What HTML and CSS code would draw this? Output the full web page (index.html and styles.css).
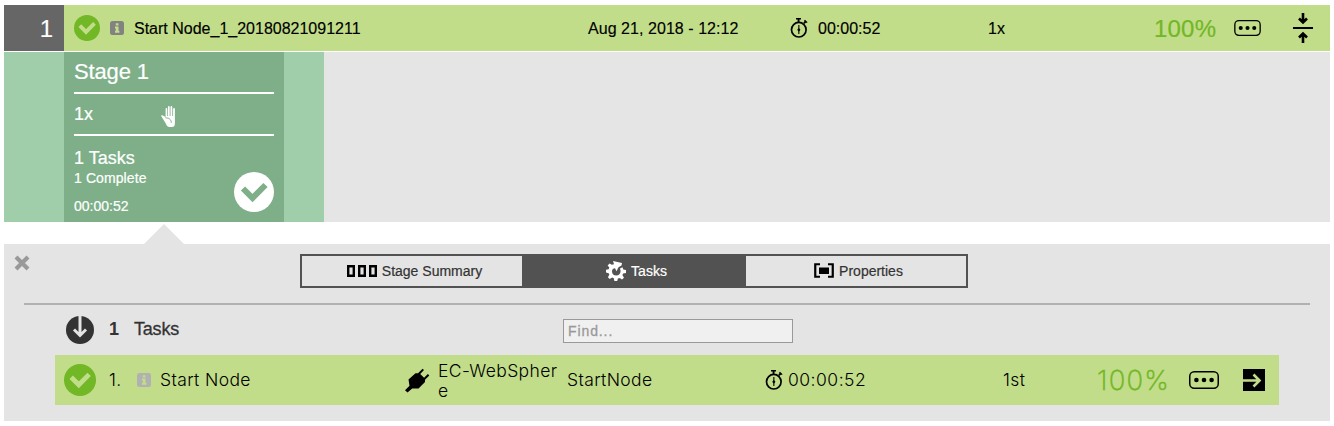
FILE: index.html
```html
<!DOCTYPE html>
<html lang="en">
<head>
<meta charset="utf-8">
<title>Pipeline run</title>
<link rel="stylesheet" href="styles.css">
</head>
<body>
<svg class="defs" width="0" height="0" aria-hidden="true">
  <symbol id="check" viewBox="0 0 40 40"><circle cx="20" cy="20" r="20"/><path class="tick" d="M9 16.500 18.500 26 31.500 13" fill="none" stroke-width="6"/></symbol>
  <symbol id="info" viewBox="0 0 14 14"><rect width="14" height="14" rx="2.500"/><path class="cut" d="M5.800 2.300h2.700v2.200H5.800zM5 5.600h3.500v4.200h.9v2H5v-2h.8V7.500H5z"/></symbol>
  <symbol id="watch" viewBox="0 0 18 20"><circle cx="8.800" cy="11.700" r="7.300" fill="none" stroke="#000" stroke-width="1.700"/><path d="M6 0h5v1.600H9.500v3H7.600v-3H6zM13.300 4.500l1.300-1.400-.6-.6 1-.7 2.600 2.400-.9.900-.7-.5-1.300 1.300zM8.300 7h1.100v3.200l1 1.600-1 1.700V16H8.300v-2.500l-1-1.700 1-1.600z"/></symbol>
  <symbol id="more" viewBox="0 0 30 18"><rect x=".75" y=".75" width="28.500" height="16.500" rx="4.500" fill="none" stroke="#000" stroke-width="1.500"/><circle cx="7.400" cy="9" r="2.300"/><circle cx="15" cy="9" r="2.300"/><circle cx="22.600" cy="9" r="2.300"/></symbol>
</svg>

<header class="run-bar">
  <div class="run-number">1</div>
  <svg class="icon-check" width="26" height="26"><use href="#check"/></svg>
  <svg class="icon-info" width="14" height="14"><use href="#info"/></svg>
  <div class="run-name">Start Node_1_20180821091211</div>
  <div class="run-date">Aug 21, 2018 - 12:12</div>
  <svg width="18" height="20"><use href="#watch"/></svg>
  <div>00:00:52</div>
  <div>1x</div>
  <div class="run-percent">100%</div>
  <svg width="27" height="16"><use href="#more"/></svg>
  <svg width="20" height="30" viewBox="0 0 20 30"><path d="M0 14h20v2H0z"/><path d="M10 0v9M6 5.500l4 4 4-4M10 30v-9M6 24.500l4-4 4 4" fill="none" stroke="#000" stroke-width="2.600"/></svg>
</header>

<section class="stages">
  <div class="stage-track">
    <article class="stage-card">
      <h2 class="stage-title">Stage 1</h2>
      <div class="stage-mode">
        <span>1x</span>
        <svg class="icon-hand" width="16" height="21" viewBox="0 0 16 21"><path d="M4.600 3q0-1 .8-1t.8 1v7h.7V1.200q0-1.200.9-1.200t.9 1.200V10h.8V1.200q0-1.200.9-1.200t.9 1.200V10h.8V3q0-1 .9-1t.9 1v14c0 3-1 4-3 4H8.500c-2 0-3-1.500-4-4L.3 10.300c-.7-1 .4-1.500 1.500-.7l2.800 1.500z"/><path d="M4.300 11.800c3.500 0 6 1.500 6 5" fill="none" stroke="#7eaf88" stroke-width="1"/></svg>
      </div>
      <div class="stage-status">
        <div>
          <div class="stage-tasks">1 Tasks</div>
          <div class="stage-complete">1 Complete</div>
          <div class="stage-time">00:00:52</div>
        </div>
        <svg class="icon-check icon-check-stage" width="40" height="40"><use href="#check"/></svg>
      </div>
    </article>
  </div>
</section>

<div class="pointer"></div>

<section class="panel">
  <div class="panel-head">
    <svg class="icon-close" width="16" height="16" viewBox="0 0 16 16"><path d="M2 2l12 12M14 2L2 14" stroke="#999" stroke-width="4.200"/></svg>
    <nav class="tabs">
      <div class="tab"><svg width="30" height="12" viewBox="0 0 30 12"><path d="M1.200 1.200h5.600v9.600H1.200zM12.200 1.200h5.600v9.600h-5.600zM23.200 1.200h5.600v9.600h-5.600z" fill="none" stroke="#000" stroke-width="2.400"/></svg>Stage Summary</div>
      <div class="tab tab-active"><svg width="20" height="20" viewBox="0 0 20 20" fill="#fff"><path d="M7 0 16 2l-.5 2.500-3 1.800-2 4L9 7.300Q6 7.500 6 10.400q.3 3.900 4.200 4.100 4.200-.2 4.400-4.500l-.6-2.500 2.500-1.200.8 2.200 2.700.5v3l-2.900.4-.7 1.700 1.600 2.600-2 1.700-2.400-1.500-1.700.6-.7 2.500H8.400l-.6-2.700-1.600-.7-2.500 1.400-1.800-1.800 1.400-2.500-.6-1.500L0 11.500V8.700l2.700-.5.600-1.700L1.600 4.400 3.600 2.500 5.800 3.800 8 3.200z"/></svg>Tasks</div>
      <div class="tab"><svg width="20" height="16" viewBox="0 0 20 16"><path d="M6 1.250H1.250v12.500H6M14 1.250h4.750v12.500H14" fill="none" stroke="#000" stroke-width="2.200"/><path d="M5 4.500h10v6.500H5z"/></svg>Properties</div>
    </nav>
  </div>
  <div class="task-head">
    <svg width="28" height="28" viewBox="0 0 28 28"><circle cx="14" cy="14" r="14" fill="#333"/><path d="M14 0v19M8 13.500l6 6 6-6" fill="none" stroke="#e4e4e4" stroke-width="3"/></svg>
    <div class="task-count">1</div>
    <div class="task-label">Tasks</div>
    <input class="find" type="text" placeholder="Find...">
  </div>
  <div class="task-row">
    <svg class="icon-check" width="32" height="32"><use href="#check"/></svg>
    <div>1.</div>
    <svg class="icon-info icon-info-pale" width="14" height="14"><use href="#info"/></svg>
    <div>Start Node</div>
    <svg width="25" height="25" viewBox="0 0 25 25"><path d="M0 22.300 4.500 17.800 3.500 11.500 10.500 5.300 13 5.300 17.600.7 19 2.100 15.200 5.900 19.100 9.800 22.900 6 24.300 7.400 20 11.700 20 14 13.500 20.500 7.200 20.500 2.500 24.500z"/></svg>
    <div class="plugin">EC-WebSphere</div>
    <div>StartNode</div>
    <svg width="18" height="20"><use href="#watch"/></svg>
    <div class="task-time">00:00:52</div>
    <div>1st</div>
    <div class="task-percent">100%</div>
    <svg width="30" height="18"><use href="#more"/></svg>
    <svg width="22" height="22" viewBox="0 0 22 22"><path d="M0 0h22v22H0z"/><path d="M0 11.500h16M10.500 5.500l6 6-6 6" fill="none" stroke="#c2dd89" stroke-width="2.600"/></svg>
  </div>
</section>
</body>
</html>
```
FILE: styles.css
```css
* { box-sizing: border-box; }

body {
  margin: 0;
  padding: 5px 4px;
  background: #fff;
  color: #000;
  font-family: "Liberation Sans", Arial, sans-serif;
  font-size: 16px;
}

svg { display: block; }
.defs { position: absolute; }

.run-bar {
  display: grid;
  grid-template-columns: 70px 36px 24px 454px 202px 28px 170px 166px 80px 59px 1fr;
  align-items: center;
  height: 46px;
  background: #c2dd89;
  -webkit-text-stroke: 0.15px currentColor;
}
.run-bar > div { padding-top: 1px; }
.run-bar > .run-number {
  width: 60px;
  height: 46px;
  padding: 0 11px 0 0;
  background: #666;
  color: #fff;
  font-size: 24px;
  line-height: 47px;
  text-align: right;
}
.run-date { letter-spacing: 0.05px; }
.run-percent {
  color: #71b726;
  font-size: 24px;
  letter-spacing: 0.2px;
  -webkit-text-stroke: 0.2px #71b726;
}

.icon-check { fill: #71b726; stroke: #c2dd89; }
#check circle { stroke: none; }
.icon-check-stage { fill: #fff; stroke: #7eaf88; }
.icon-info { fill: #828282; }
.icon-info-pale { fill: #b1b1b1; }
.cut { fill: #c2dd89; }

.stages {
  height: 170px;
  margin-top: 1px;
  background: #e5e5e5;
}
.stage-track {
  width: 320px;
  height: 170px;
  padding: 0 40px 0 60px;
  background: #a0ceab;
}
.stage-card {
  height: 170px;
  padding: 0 10px;
  background: #7eaf88;
  color: #fff;
  -webkit-text-stroke: 0.2px #fff;
}
.stage-title {
  height: 42px;
  margin: 0;
  border-bottom: 2px solid #fff;
  font-size: 22px;
  font-weight: 400;
  letter-spacing: -0.15px;
  line-height: 40px;
}
.stage-mode {
  display: flex;
  align-items: center;
  gap: 68px;
  height: 42px;
  border-bottom: 2px solid #fff;
  font-size: 18px;
}
.icon-hand { margin-top: 4px; fill: #fff; }
.stage-status {
  display: flex;
  align-items: flex-end;
  justify-content: space-between;
  height: 76px;
}
.stage-status > div { height: 64px; }
.stage-tasks { font-size: 18px; line-height: 20px; }
.stage-complete { font-size: 14px; letter-spacing: 0.1px; line-height: 20px; }
.stage-time { margin-top: 8px; font-size: 14px; line-height: 20px; }

.pointer {
  width: 40px;
  height: 20px;
  margin: 2px 0 0 140px;
  background: #e4e4e4;
  clip-path: polygon(50% 0, 100% 100%, 0 100%);
}

.panel {
  height: 177px;
  padding: 0 20px;
  background: #e4e4e4;
}
.panel-head {
  display: flex;
  align-items: flex-start;
  height: 61px;
  padding-top: 10px;
  border-bottom: 2px solid #b1b1b1;
}
.icon-close { margin: 1px 0 0 -10px; }
.tabs {
  display: flex;
  width: 668px;
  height: 34px;
  margin-left: 270px;
  border: 2px solid #525252;
}
.tab {
  display: flex;
  flex: 0 0 220px;
  align-items: center;
  justify-content: center;
  gap: 5px;
  padding-left: 5px;
  color: #333;
  font-size: 14px;
  -webkit-text-stroke: 0.2px currentColor;
}
.tab-active {
  flex-basis: 224px;
  background: #525252;
  color: #fff;
}

.task-head {
  display: grid;
  grid-template-columns: 43px 25px 429px 230px;
  align-items: center;
  height: 50px;
  padding-left: 42px;
  color: #333;
  font-size: 18px;
}
.task-count { margin-top: -2px; font-weight: 700; }
.task-label { margin-top: -2px; letter-spacing: -0.2px; -webkit-text-stroke: 0.3px #333; }
.find {
  width: 230px;
  height: 24px;
  margin-top: 2px;
  padding: 0 4px;
  border: 1px solid #999;
  border-radius: 0;
  background: #f0f0f0;
  font-family: "Liberation Sans", Arial, sans-serif;
  font-size: 14px;
  letter-spacing: 0.9px;
}
.find::placeholder { color: #999; opacity: 1; -webkit-text-stroke: 0.3px #999; }

.task-row {
  display: grid;
  grid-template-columns: 45px 28px 23px 245px 33px 129px 198px 23px 215px 94px 92px 54px 22px;
  align-items: center;
  width: 1224px;
  height: 50px;
  margin-left: 31px;
  padding-left: 9px;
  background: #c2dd89;
  font-family: Inter, "Liberation Sans", sans-serif;
  font-size: 17.500px;
  font-weight: 300;
  letter-spacing: 0.38px;
  line-height: 20px;
}
.task-row > .plugin {
  width: 124px;
  padding-top: 1px;
  word-break: break-all;
}
.task-time { letter-spacing: 0.5px; }
.task-percent {
  color: #71b726;
  font-size: 27.500px;
  font-weight: 200;
  letter-spacing: 1.2px;
  line-height: 34px;
  -webkit-text-stroke: 0.5px #71b726;
}
```
